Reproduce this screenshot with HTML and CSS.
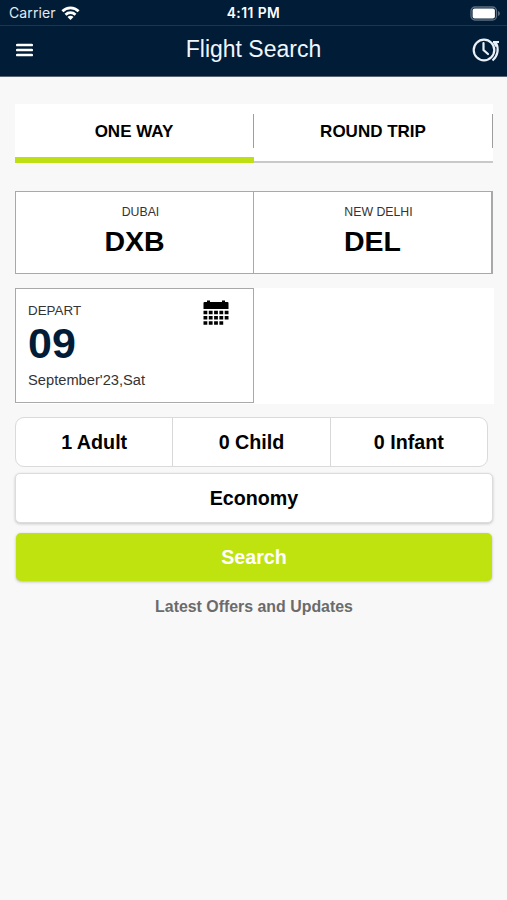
FILE: index.html
```html
<!DOCTYPE html>
<html lang="en">
<head>
<meta charset="utf-8">
<title>Flight Search</title>
<link rel="stylesheet" href="styles.css">
</head>
<body>
<header class="top">
  <div class="status">
    <div class="carrier"><span>Carrier</span>
      <svg width="19" height="14" viewBox="0 0 18 14" fill="none" stroke="#fff" stroke-width="2.7"><path d="M.9 5.3C5.4.6 12.6.6 17.1 5.3M4 8.8c2.8-2.8 7.200-2.800 10 0"/><path d="M9 14 6 11c1.600-1.600 4.400-1.600 6 0Z" fill="#fff" stroke="none"/></svg>
    </div>
    <div class="time">4:11 PM</div>
    <div class="battery">
      <svg width="31" height="15" viewBox="0 0 31 15"><rect x="1" y="1" width="25.500" height="13" rx="4" fill="none" stroke="#5c6d80" stroke-width="1.300"/><rect x="2.600" y="2.600" width="22.300" height="9.800" rx="2" fill="#fff"/><path d="M28 5v5c2.500-1 2.500-4 0-5Z" fill="#5c6d80"/></svg>
    </div>
  </div>
  <nav class="bar">
    <svg class="menu" width="17" height="14" viewBox="0 0 17 14" stroke="#fff" stroke-width="2.700" stroke-linecap="round"><path d="M1.300 2h14.400M1.300 7h14.400M1.300 12h14.400"/></svg>
    <h1>Flight Search</h1>
    <svg class="history" width="28" height="24" viewBox="0 0 28 24" fill="none" stroke="#e9f0f8" stroke-width="2.200"><circle cx="12" cy="12" r="10.300"/><path d="M11.500 5v7l4.500 4" stroke-linecap="round"/><path d="M20.500 22.500C26 18 27 10.500 24 5M21 4h6M21.500 3.500l3 5"/></svg>
  </nav>
</header>
<main>
  <div class="tabs">
    <div class="tab active"><span>ONE WAY</span></div>
    <div class="tab"><span>ROUND TRIP</span></div>
  </div>
  <div class="route">
    <div class="port"><small>DUBAI</small><b>DXB</b></div>
    <div class="port"><small>NEW DELHI</small><b>DEL</b></div>
  </div>
  <div class="dates">
    <div class="date">
      <div class="label">DEPART</div>
      <div class="day">09</div>
      <div class="month">September'23,Sat</div>
      <svg class="cal" width="26" height="26" viewBox="0 0 26 26"><path d="M1.500 2H4V.5h3V2h12V.5h3V2h2.500q1 0 1 1v6H.5V3q0-1 1-1Z"/><path d="M.5 12.500h25M.5 17.800h25M.5 23h20" fill="none" stroke="#000" stroke-width="3.600" stroke-dasharray="3.800 1.500"/></svg>
    </div>
  </div>
  <div class="pax"><div>1 Adult</div><div>0 Child</div><div>0 Infant</div></div>
  <div class="cabin">Economy</div>
  <div class="search">Search</div>
  <p class="offers">Latest Offers and Updates</p>
</main>
</body>
</html>
```
FILE: styles.css
```css
* { box-sizing: border-box; }
body {
  margin: 0;
  height: 900px;
  overflow: hidden;
  background: #f8f8f8;
  color: #000;
  font-family: "Liberation Sans", Arial, sans-serif;
}
svg { display: block; }
.top {
  height: 77px;
  background: #001c37;
  color: #fff;
  border-bottom: 1px solid #596570;
}
.status {
  height: 26px;
  border-bottom: 1px solid #2b3238;
  display: grid;
  grid-template-columns: 1fr auto 1fr;
  align-items: center;
  padding: 1px 6px 0 9px;
  font-family: Inter, sans-serif;
  font-size: 14px;
  line-height: 24px;
}
.carrier { display: flex; align-items: center; gap: 5px; color: #e3eaf1; letter-spacing: .1px; }
.time { font-weight: 600; font-size: 13.8px; letter-spacing: .45px; margin-right: 3px; }
.battery { justify-self: end; }
.bar {
  height: 50px;
  display: grid;
  grid-template-columns: 1fr auto 1fr;
  align-items: center;
  padding: 0 7px 3px 16px;
}
.bar h1 { margin: 0 9px 2px 0; font-size: 23px; font-weight: 400; line-height: 30px; color: #f0f6fc; }
.history { justify-self: end; }
main { padding: 27px 14px 0 15px; }
.tabs { height: 59px; display: flex; background: #fff; width: 478px; }
.tab {
  flex: 1;
  border-bottom: 2px solid #c9c9c9;
  padding-top: 10px;
}
.tab span {
  display: block;
  height: 34px;
  line-height: 35px;
  text-align: center;
  font-size: 17px;
  font-weight: 700;
  border-right: 1px solid #9e9e9e;
}
.tab.active { border-bottom: 6px solid #bddf14; }
.route {
  margin-top: 28px;
  height: 83px;
  width: 478px;
  display: flex;
  background: #fff;
  border: 1px solid #a9a9a9;
  border-right: 2px solid #a9a9a9;
}
.port { flex: 1; display: flex; flex-direction: column; align-items: center; padding-top: 12px; }
.port:first-child { border-right: 1px solid #a9a9a9; }
.port small { font-size: 12.3px; line-height: 16px; color: #333; padding-left: 12px; }
.port b { font-size: 28.5px; line-height: 36px; margin-top: 3px; }
.dates { margin-top: 14px; height: 116px; background: #fff; width: 479px; }
.date { position: relative; width: 239px; height: 115px; border: 1px solid #a9a9a9; padding: 13px 0 0 12px; color: #333; }
.label { font-size: 13.4px; line-height: 17px; }
.day { font-size: 43px; line-height: 46px; font-weight: 700; color: #001c37; margin-top: 1px; }
.month { font-size: 14.7px; line-height: 20px; margin-top: 4px; }
.cal { position: absolute; left: 187px; top: 11px; }
.pax {
  margin-top: 13px;
  width: 473px;
  height: 50px;
  display: flex;
  background: #fff;
  border: 1px solid #dadada;
  border-radius: 9px;
  line-height: 49px;
}
.pax div { flex: 1; text-align: center; font-size: 19.7px; font-weight: 700; border-right: 1px solid #d8d8d8; }
.pax div:last-child { border-right: 0; }
.cabin, .search {
  height: 50px;
  line-height: 49px;
  text-align: center;
  font-size: 19.7px;
  font-weight: 700;
  border-radius: 5px;
}
.cabin { margin-top: 6px; background: #fff; border: 1px solid #dcdcdc; box-shadow: 0 1px 3px rgba(0,0,0,.2); }
.search { margin: 10px 1px 0; height: 48px; background: #bfe30e; color: #fff; box-shadow: 0 1px 3px rgba(0,0,0,.25); }
.offers { margin: 16px 0 0; text-align: center; font-size: 15.9px; line-height: 20px; font-weight: 700; color: #6b6b6b; }
```
